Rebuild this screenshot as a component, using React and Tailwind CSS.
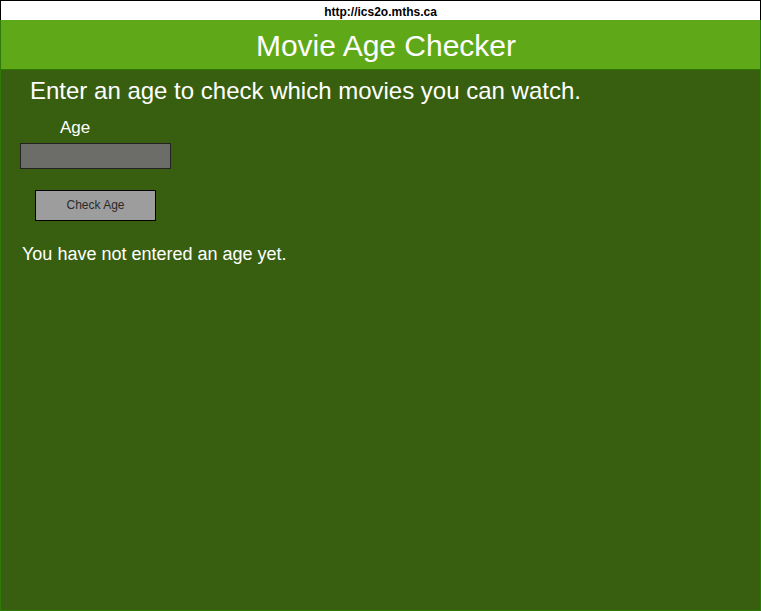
export default function App() {
  return (
    <div
      className="w-[761px] h-[611px] flex flex-col bg-[#385f10]"
      style={{ fontFamily: '"Liberation Sans", Arial, sans-serif' }}
    >
      <div className="h-[20px] shrink-0 bg-white border-t border-x border-black flex items-center justify-center">
        <span className="text-[12px] font-bold text-black leading-none pt-[2px]">
          http://ics2o.mths.ca
        </span>
      </div>
      <div className="flex-1 flex flex-col border-x border-b border-[#2f7a06]">
        <header className="h-[50px] shrink-0 bg-[#5fa919] border-b-[1px] border-[#2f7a06] flex items-center justify-center pl-[11px]">
          <h1 className="text-[30px] text-white leading-none pt-[2px]">Movie Age Checker</h1>
        </header>
        <main className="flex flex-col">
          <p className="text-[24px] text-white leading-none pl-[29px] pt-[9px]">
            Enter an age to check which movies you can watch.
          </p>
          <label className="text-[17px] text-white leading-none pl-[59px] pt-[16px]">
            Age
          </label>
          <div className="pl-[19px] pt-[7px]">
            <input
              type="text"
              className="block w-[151px] h-[26px] bg-[#6c6d68] border border-[#222] outline-none"
            />
          </div>
          <div className="pl-[34px] pt-[21px]">
            <button className="block w-[121px] h-[31px] bg-[#9d9d9d] border border-black text-[12px] text-[#2a2a2a] pb-[1px]">
              Check Age
            </button>
          </div>
          <p className="text-[18px] text-white leading-none pl-[21px] pt-[24px]">
            You have not entered an age yet.
          </p>
        </main>
      </div>
    </div>
  );
}
